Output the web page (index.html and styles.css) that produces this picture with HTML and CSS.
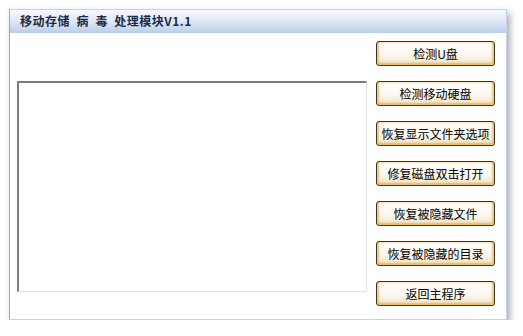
FILE: index.html
```html
<!DOCTYPE html>
<html lang="zh-CN">
<head>
    <meta charset="UTF-8">
    <link rel="stylesheet" href="styles.css">
    <title>移动存储病毒处理模块</title>
</head>
<body>
    <div class="window">
        <div class="title-bar">移动存储&nbsp;&nbsp;病&nbsp;&nbsp;毒&nbsp;&nbsp;处理模块V1.1</div>
        <div class="content">
            <div class="output-box"></div>
            <div class="buttons">
                <button class="btn">检测U盘</button>
                <button class="btn">检测移动硬盘</button>
                <button class="btn">恢复显示文件夹选项</button>
                <button class="btn">修复磁盘双击打开</button>
                <button class="btn">恢复被隐藏文件</button>
                <button class="btn">恢复被隐藏的目录</button>
                <button class="btn">返回主程序</button>
            </div>
        </div>
    </div>
</body>
</html>
```

FILE: styles.css
```css
body {
    margin: 0;
    background-color: #fff;
    font-family: "Noto Sans CJK SC", sans-serif;
    font-size: 12px;
}

.window {
    margin: 9px 0 0 9px;
    width: 496px;
    height: 309px;
    border: 1px solid #c9d3df;
    border-left-color: #9aa8b8;
    background-color: #fff;
    box-shadow: 3px 4px 7px rgba(60, 70, 85, 0.45);
}

.title-bar {
    height: 23px;
    line-height: 22px;
    padding-left: 10px;
    font-weight: bold;
    font-size: 12px;
    letter-spacing: 0.5px;
    color: #1c2b45;
    background: linear-gradient(to bottom, #f7f9fd 0%, #dfe8f5 50%, #b9cde9 100%);
}

.content {
    display: flex;
    padding: 8px 11px 0 7px;
    gap: 9px;
}

.output-box {
    width: 349px;
    height: 208px;
    margin-top: 40px;
    background-color: #fff;
    border: 1px solid #e3e3e3;
    border-top: 2px solid #7e7e78;
    border-left: 2px solid #7e7e78;
}

.buttons {
    display: flex;
    flex-direction: column;
    gap: 15px;
}

.btn {
    width: 119px;
    height: 25px;
    padding: 0;
    font-family: "Noto Sans CJK SC", sans-serif;
    font-size: 12px;
    color: #000;
    border: 1px solid #3b3526;
    border-radius: 3px;
    background: linear-gradient(to bottom, #ffffff 0%, #fbf8ef 55%, #efe2c0 100%);
    box-shadow: inset 2px 0 2px #f2c47a, inset -2px 0 2px #f2c47a, inset 0 -2px 2px #e8b466;
}
```
